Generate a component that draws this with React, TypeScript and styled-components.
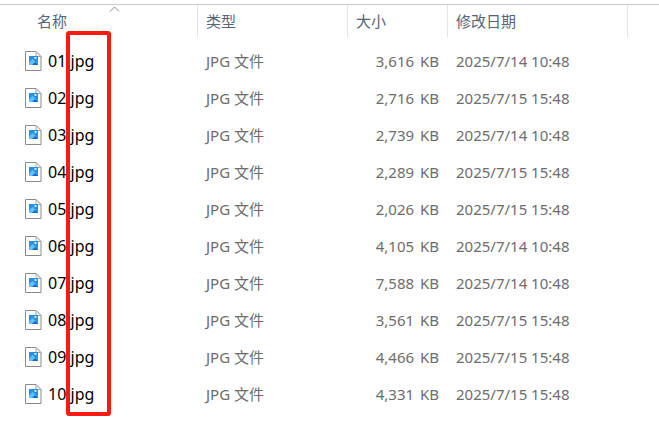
import React, { FC } from "react";
import styled, { createGlobalStyle } from "styled-components";

const GlobalStyle = createGlobalStyle`
  html, body {
    margin: 0;
    padding: 0;
    background: #ffffff;
  }
`;

const Page = styled.div`
  position: relative;
  width: 659px;
  height: 436px;
  overflow: hidden;
  padding-top: 4px;
  box-sizing: border-box;
  font-family: "Noto Sans", "Noto Sans CJK SC", sans-serif;
`;

const Header = styled.div`
  position: relative;
  display: grid;
  grid-template-columns: 198px 150px 100px 180px;
  height: 33px;
  border-top: 1px solid #d0cbc7;
  box-sizing: border-box;
`;

const HeaderCell = styled.div<{ $indent: number }>`
  display: flex;
  align-items: center;
  height: 32px;
  padding-left: ${(p) => p.$indent}px;
  padding-bottom: 2px;
  border-right: 1px solid #e5e5e5;
  box-sizing: border-box;
  font-size: 15px;
  color: #566579;
  font-family: "Noto Sans CJK SC", sans-serif;
`;

const SortArrow = styled.svg`
  position: absolute;
  left: 109px;
  top: 1px;
`;

const Rows = styled.div`
  display: flex;
  flex-direction: column;
  padding-top: 5px;
`;

const Row = styled.div`
  display: grid;
  grid-template-columns: 198px 150px 100px 180px;
  height: 37px;
  align-items: center;
  font-size: 15px;
  color: #6d6d6d;
`;

const NameCell = styled.div`
  display: flex;
  align-items: center;
  padding-left: 25px;
  gap: 6px;
  color: #000000;
  font-size: 16px;
`;

const TypeCell = styled.div`
  padding-left: 8px;
`;

const SizeCell = styled.div`
  text-align: right;
  padding-right: 9px;
  word-spacing: 2px;
`;

const DateCell = styled.div`
  padding-left: 8px;
`;

const Highlight = styled.div`
  position: absolute;
  left: 66px;
  top: 31px;
  width: 45px;
  height: 385px;
  border: 4px solid #fb1a12;
  border-radius: 3px;
  box-sizing: border-box;
`;

const FileIcon: FC = () => (
  <svg width="17" height="20" viewBox="0 0 17 20" fill="none">
    <path d="M.5.5h10.5l5 5v14H.5z" fill="#fff" stroke="#8a8a8a" />
    <path d="M11 .5v5h5z" fill="#f4f4f4" stroke="#a8a8a8" />
    <rect x="4" y="5" width="9" height="9" fill="#2b8fe0" />
    <path d="M4 14v-2.5L7.5 8l5.5 5v1z" fill="#62c0f5" />
    <path d="M7 14l3-3 3 2.5V14z" fill="#1668c0" />
    <rect x="9.5" y="6" width="2" height="2" fill="#cfeaff" />
  </svg>
);

const files = [
  { name: "01.jpg", size: "3,616 KB", date: "2025/7/14 10:48" },
  { name: "02.jpg", size: "2,716 KB", date: "2025/7/15 15:48" },
  { name: "03.jpg", size: "2,739 KB", date: "2025/7/14 10:48" },
  { name: "04.jpg", size: "2,289 KB", date: "2025/7/15 15:48" },
  { name: "05.jpg", size: "2,026 KB", date: "2025/7/15 15:48" },
  { name: "06.jpg", size: "4,105 KB", date: "2025/7/14 10:48" },
  { name: "07.jpg", size: "7,588 KB", date: "2025/7/14 10:48" },
  { name: "08.jpg", size: "3,561 KB", date: "2025/7/15 15:48" },
  { name: "09.jpg", size: "4,466 KB", date: "2025/7/15 15:48" },
  { name: "10.jpg", size: "4,331 KB", date: "2025/7/15 15:48" },
];

export default function App() {
  return (
    <Page>
      <GlobalStyle />
      <Header>
        <HeaderCell $indent={37}>名称</HeaderCell>
        <HeaderCell $indent={8}>类型</HeaderCell>
        <HeaderCell $indent={8}>大小</HeaderCell>
        <HeaderCell $indent={8}>修改日期</HeaderCell>
        <SortArrow width="11" height="6" viewBox="0 0 11 6" fill="none">
          <path d="M1 5.5L5.5 1 10 5.5" stroke="#8c8c8c" />
        </SortArrow>
      </Header>
      <Rows>
        {files.map((file) => (
          <Row key={file.name}>
            <NameCell>
              <FileIcon />
              {file.name}
            </NameCell>
            <TypeCell>JPG 文件</TypeCell>
            <SizeCell>{file.size}</SizeCell>
            <DateCell>{file.date}</DateCell>
          </Row>
        ))}
      </Rows>
      <Highlight />
    </Page>
  );
}
